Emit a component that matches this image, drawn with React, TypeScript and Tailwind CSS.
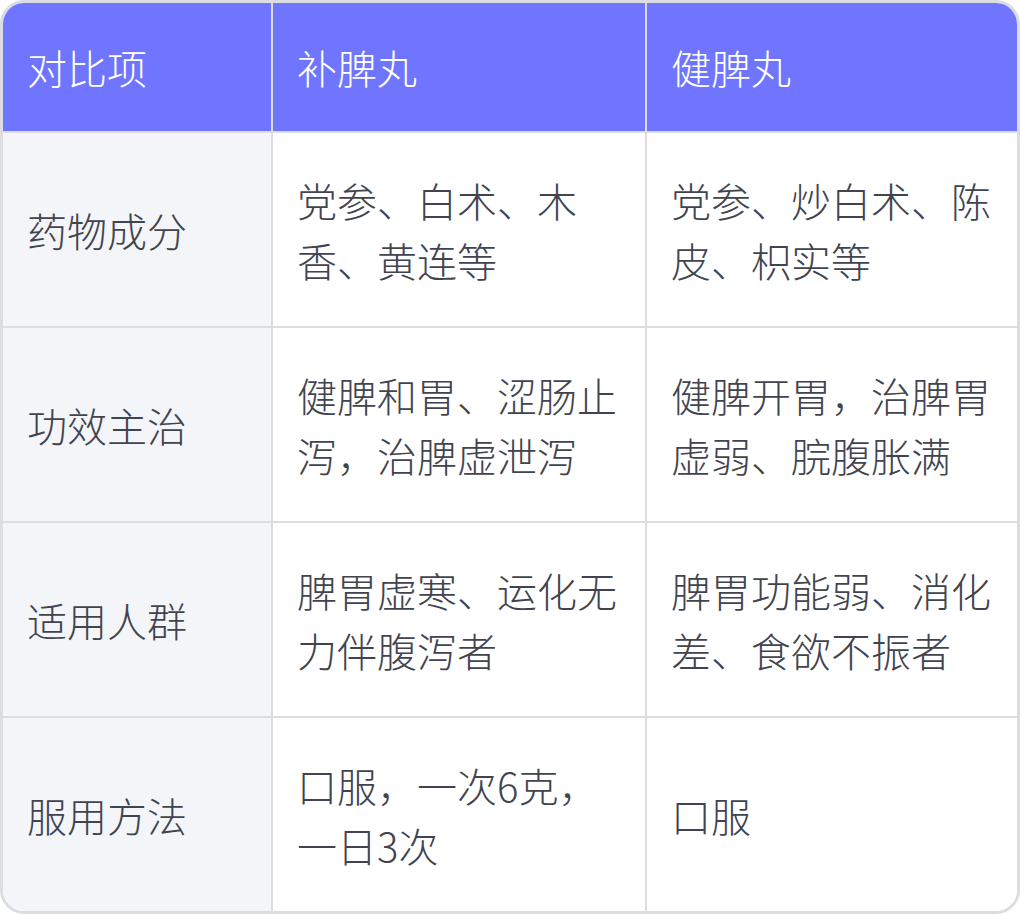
const headers = ["对比项", "补脾丸", "健脾丸"];

const rows = [
  ["药物成分", "党参、白术、木香、黄连等", "党参、炒白术、陈皮、枳实等"],
  ["功效主治", "健脾和胃、涩肠止泻，治脾虚泄泻", "健脾开胃，治脾胃虚弱、脘腹胀满"],
  ["适用人群", "脾胃虚寒、运化无力伴腹泻者", "脾胃功能弱、消化差、食欲不振者"],
  ["服用方法", "口服，一次6克，一日3次", "口服"],
];

const App = () => {
  return (
    <div className="w-[1020px] h-[915px] bg-white" style={{ fontFamily: '"Noto Sans CJK SC", "Noto Sans", sans-serif' }}>
      <div className="w-[1020px] border-[3px] border-[#dcdde2] rounded-[24px] overflow-hidden">
        <div className="grid grid-cols-[270px_374px_1fr]">
          {headers.map((h, i) => (
            <div
              key={h}
              className={`bg-[#7075ff] text-white font-light text-[40px] leading-[60px] px-6 h-[130px] flex items-center border-b-2 border-[#dcdde2] ${
                i < 2 ? "border-r-2" : ""
              }`}
            >
              {h}
            </div>
          ))}
          {rows.map((row, r) =>
            row.map((cell, c) => (
              <div
                key={`${r}-${c}`}
                className={`text-[#41444f] font-light text-[40px] leading-[60px] px-6 flex items-center border-[#dcdde2] ${
                  c < 2 ? "border-r-2" : ""
                } ${r < rows.length - 1 ? "border-b-2 h-[195px]" : "h-[193px]"} ${
                  c === 0 ? "bg-[#f4f5f9]" : "bg-white"
                }`}
              >
                <span>{cell}</span>
              </div>
            ))
          )}
        </div>
      </div>
    </div>
  );
};

export default App;
